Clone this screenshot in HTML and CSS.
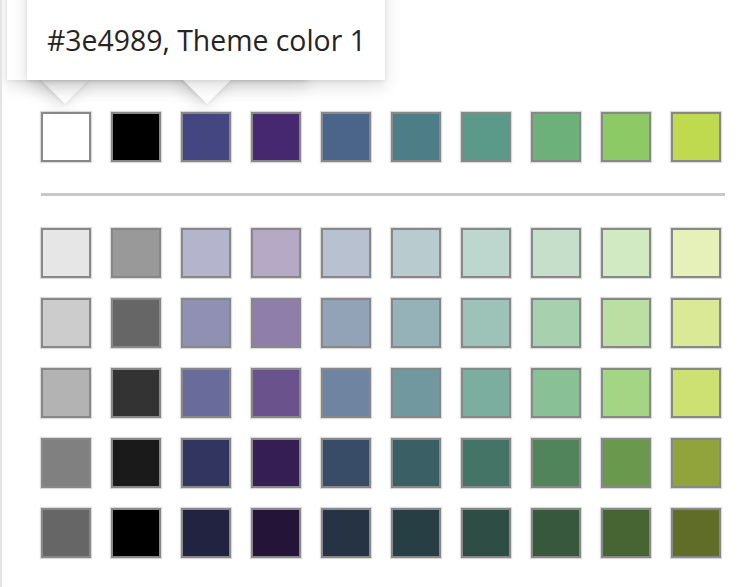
FILE: index.html
```html
<!DOCTYPE html>
<html>
	<head>
		<meta charset="UTF-8">
		<title>Theme colors</title>
		<link rel="stylesheet" href="styles.css">
	</head>
	<body>
		<div class="picker">
			<div class="tip ghost"><span class="beak"></span><div class="tip-body"></div></div>
			<div class="tip main"><span class="beak"></span><div class="tip-body">#3e4989, Theme color 1</div></div>

			<div class="grid" id="base"></div>
			<div class="divider"></div>
			<div class="grid" id="shades"></div>
		</div>
		<script type="text/javascript">
			var base=["#ffffff","#000000","#444681","#45286f","#4a6589","#4d7e87","#5b9a88","#6db07a","#8dca66","#c0da4f"];
			var fixed={
				0:["#e6e6e6","#cccccc","#b3b3b3","#808080","#666666"],
				1:["#999999","#666666","#333333","#1a1a1a","#000000"]
			};
			var steps=[0.6,0.4,0.2,-0.25,-0.5];
			function hex(n){
				n=Math.round(n);
				return (n<16?"0":"")+n.toString(16);
			}
			function shade(c,p){
				var out="#";
				for(var i=1;i<7;i+=2){
					var v=parseInt(c.substr(i,2),16);
					out+=hex(p>0?v+(255-v)*p:v*(1+p));
				}
				return out;
			}
			function cell(color){
				var d=document.createElement("div");
				d.className="swatch";
				d.style.background=color;
				return d;
			}
			var oBase=document.getElementById("base");
			var oShades=document.getElementById("shades");
			for(var i=0;i<base.length;i++){
				oBase.appendChild(cell(base[i]));
			}
			for(var r=0;r<steps.length;r++){
				for(var j=0;j<base.length;j++){
					var c=fixed[j]?fixed[j][r]:shade(base[j],steps[r]);
					oShades.appendChild(cell(c));
				}
			}
		</script>
	</body>
</html>
```

FILE: styles.css
```css
*{margin:0;padding:0;box-sizing:border-box;}
html,body{background:#fff;}
body{font-family:"Open Sans","Noto Sans",sans-serif;color:#252423;}

.picker{
	position:relative; width:753px; height:587px; overflow:hidden;
	border-left:2px solid #e4e4e4; padding:112px 0 0 39px;
}
.grid{display:grid; grid-template-columns:repeat(10,50px); gap:20px;}
.swatch{width:50px; height:50px; border:2px solid #888; box-shadow:0 0 1px 1px rgba(0,0,0,.14);}
.divider{width:684px; height:3px; background:#c8c8c8; margin:31px 0 32px 0;}

/* tooltips lie over the panel */
.tip{position:absolute; top:-20px; height:100px;}
.tip-body{
	position:relative; height:100%; background:#fff; padding:40px 0 0 20px;
	font-size:28.4px; line-height:40px; white-space:nowrap;
	box-shadow:0 6px 16px rgba(0,0,0,.13),0 1px 4px rgba(0,0,0,.09);
}
.beak{
	position:absolute; bottom:-24px; width:34px; height:34px; background:#fff;
	transform:rotate(45deg); margin-bottom:7px;
	box-shadow:0 6px 16px rgba(0,0,0,.13),0 1px 4px rgba(0,0,0,.09);
}
.ghost{left:5px; width:300px; opacity:.92;}
.ghost .beak{left:41px;}
.main{left:25px; width:358px;}
.main .beak{left:163px;}
```
